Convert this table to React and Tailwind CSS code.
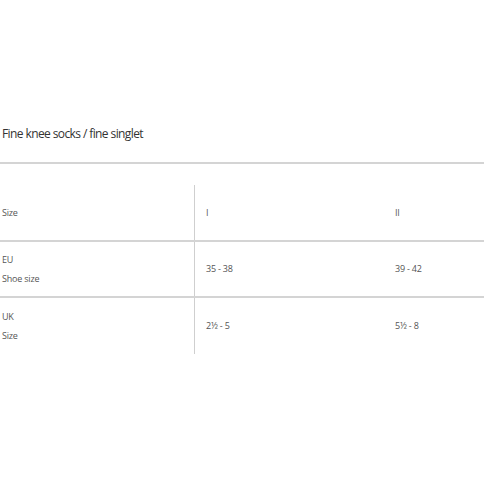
export default function App() {
  const rows = [
    { a: ["EU", "Shoe size"], b: "35 - 38", c: "39 - 42" },
    { a: ["UK", "Size"], b: "2½ - 5", c: "5½ - 8" },
  ];
  return (
    <div className="w-[484px] h-[484px] bg-white text-[#555]" style={{ fontFamily: '"Open Sans", sans-serif' }}>
      <div className="pt-[125px]">
        <div className="pl-[2px] text-[12px] leading-[18px] text-[#333] tracking-[-0.6px]">Fine knee socks / fine singlet</div>
        <div className="mt-[19px] h-[2px] bg-[#d4d4d4]" />
        <div className="mt-[21px] text-[9px] tracking-[-0.2px]">
          <div className="flex h-[57px] border-b-2 border-[#d4d4d4]">
            <div className="w-[195px] border-r border-[#cfcfcf] flex items-center pl-[2px]">Size</div>
            <div className="w-[189px] flex items-center pl-[11px]">I</div>
            <div className="flex-1 flex items-center pl-[11px]">II</div>
          </div>
          {rows.map((r, i) => (
            <div key={i} className={`flex h-[56px] ${i === 0 ? "border-b-2 border-[#d4d4d4]" : ""}`}>
              <div className="w-[195px] border-r border-[#cfcfcf] flex flex-col justify-center pl-[2px] gap-[7px]">
                <div className="leading-[12px]">{r.a[0]}</div>
                <div className="leading-[12px]">{r.a[1]}</div>
              </div>
              <div className="w-[189px] flex items-center pl-[11px]">{r.b}</div>
              <div className="flex-1 flex items-center pl-[11px]">{r.c}</div>
            </div>
          ))}
        </div>
      </div>
    </div>
  );
}
